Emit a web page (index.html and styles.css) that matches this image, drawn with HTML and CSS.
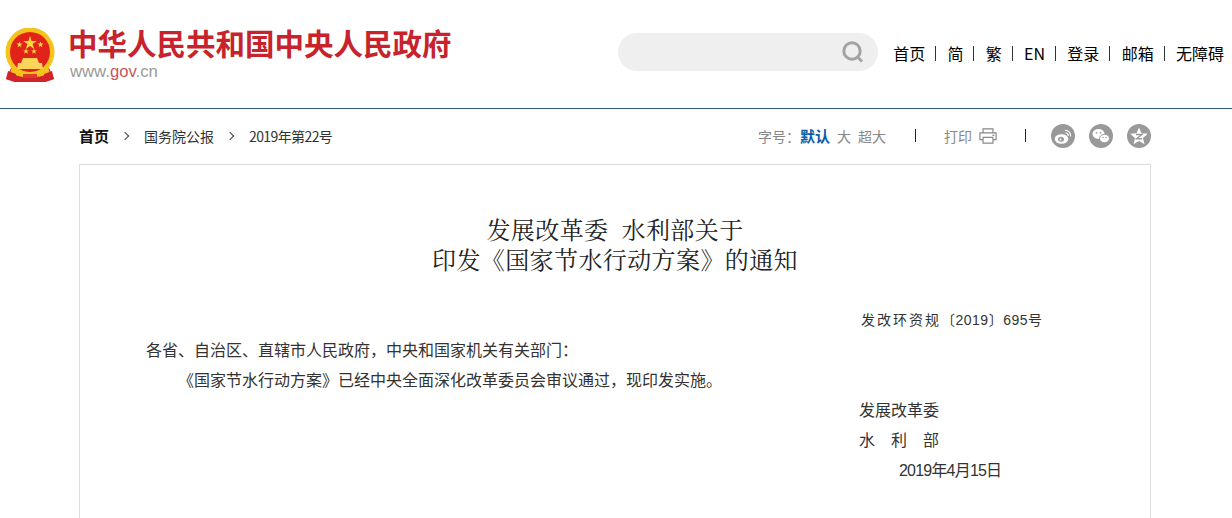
FILE: index.html
```html
<!DOCTYPE html>
<html lang="zh-CN">

<head>
    <meta charset="UTF-8">
    <meta name="viewport" content="width=device-width, initial-scale=1.0">
    <title>发展改革委 水利部关于印发《国家节水行动方案》的通知</title>
    <link rel="stylesheet" href="styles.css">
</head>

<body>
    <header class="header">
        <div class="logo">
            <svg class="emblem" width="50" height="54" viewBox="0 0 50 54">
                <path d="M6 40 L1 51 L10 54 L40 54 L49 51 L44 40 Z" fill="#d2232a" />
                <circle cx="25" cy="24" r="24.500" fill="#f5c31c" />
                <circle cx="25" cy="24" r="20" fill="#e2231a" />
                <polygon points="25,8 26.600,13 31.800,13 27.600,16 29.200,21 25,18 20.800,21 22.400,16 18.200,13 23.400,13" fill="#fbd93a" />
                <polygon points="14.500,13.500 15.300,15.600 17.500,15.600 15.700,17 16.400,19.200 14.500,17.900 12.600,19.200 13.300,17 11.500,15.600 13.700,15.600" fill="#fbd93a" />
                <polygon points="35.500,13.500 36.300,15.600 38.500,15.600 36.700,17 37.400,19.200 35.500,17.900 33.600,19.200 34.300,17 32.500,15.600 34.700,15.600" fill="#fbd93a" />
                <polygon points="21,20.500 21.800,22.500 23.800,22.500 22.200,23.800 22.800,25.800 21,24.600 19.200,25.800 19.800,23.800 18.200,22.500 20.200,22.500" fill="#fbd93a" />
                <polygon points="29,20.500 29.800,22.500 31.800,22.500 30.200,23.800 30.800,25.800 29,24.600 27.200,25.800 27.800,23.800 26.200,22.500 28.200,22.500" fill="#fbd93a" />
                <path d="M18 30 L32 30 L34 35 L37 35 L38 41 L12 41 L13 35 L16 35 Z" fill="#fbd45a" />
                <path d="M7 39 Q25 49 43 39 L45 45 Q25 54 5 45 Z" fill="#f5c31c" />
                <path d="M3 43 L11 46 L10 54 L1 51 Z M47 43 L39 46 L40 54 L49 51 Z" fill="#d2232a" />
                <rect x="18" y="46" width="14" height="4" fill="#e03a2a" />
            </svg>
            <div class="logo-text">
                <div class="logo-name">中华人民共和国中央人民政府</div>
                <div class="logo-url">www.<span class="logo-url-red">gov</span>.cn</div>
            </div>
        </div>
        <div class="header-right">
            <div class="search">
                <svg width="24" height="24" viewBox="0 0 24 24">
                    <circle cx="11" cy="11" r="8.200" fill="none" stroke="#a3a3a3" stroke-width="3" />
                    <line x1="16.500" y1="17" x2="21" y2="21.500" stroke="#a3a3a3" stroke-width="3" />
                </svg>
            </div>
            <nav class="top-nav">
                <a>首页</a><i></i><a>简</a><i></i><a>繁</a><i></i><a>EN</a><i></i><a>登录</a><i></i><a>邮箱</a><i></i><a>无障碍</a>
            </nav>
        </div>
    </header>

    <div class="toolbar">
        <div class="crumbs">
            <a class="crumb-home">首页</a>
            <span class="arrow"></span>
            <a>国务院公报</a>
            <span class="arrow"></span>
            <a class="crumb-issue">2019年第22号</a>
        </div>
        <div class="tools">
            <span class="size-label">字号：</span>
            <a class="size-on">默认</a>
            <a class="size">大</a>
            <a class="size">超大</a>
            <i class="tool-line line-a"></i>
            <span class="print">打印</span>
            <svg class="print-icon" width="18" height="18" viewBox="0 0 20 18">
                <path d="M4.500 5V1h11v4M4.500 13H1V5.500h18V13h-3.500M4.500 10.500h11v6.500h-11z" fill="none" stroke="#888" stroke-width="1.300" />
                <rect x="15" y="7.500" width="2" height="1.500" fill="#888" />
            </svg>
            <i class="tool-line line-b"></i>
            <svg class="share" width="24" height="24" viewBox="0 0 24 24">
                <circle cx="12" cy="12" r="12" fill="#999" />
                <ellipse cx="10.500" cy="15" rx="6.800" ry="4.800" fill="#fff" />
                <ellipse cx="10" cy="15.200" rx="3" ry="2.500" fill="#999" />
                <circle cx="9.500" cy="15.500" r="1" fill="#fff" />
                <path d="M14 6.500a5 5 0 0 1 5.500 6M14.500 9a2.500 2.500 0 0 1 2.700 3" fill="none" stroke="#fff" stroke-width="1.200" />
            </svg>
            <svg class="share" width="24" height="24" viewBox="0 0 24 24">
                <circle cx="12" cy="12" r="12" fill="#999" />
                <ellipse cx="9.500" cy="10" rx="6" ry="5" fill="#fff" />
                <ellipse cx="15.500" cy="14.500" rx="5" ry="4.200" fill="#fff" stroke="#999" stroke-width="1" />
                <circle cx="7.500" cy="8.800" r="0.900" fill="#999" />
                <circle cx="11.500" cy="8.800" r="0.900" fill="#999" />
                <circle cx="14" cy="13.500" r="0.700" fill="#999" />
                <circle cx="17" cy="13.500" r="0.700" fill="#999" />
            </svg>
            <svg class="share" width="24" height="24" viewBox="0 0 24 24">
                <circle cx="12" cy="12" r="12" fill="#999" />
                <polygon points="12,3.500 14.500,9.300 20.800,9.800 16,14 17.500,20.200 12,16.900 6.500,20.200 8,14 3.200,9.800 9.500,9.300" fill="#fff" />
                <path d="M9 10.500h6l-5.500 4.200h5.500" fill="none" stroke="#999" stroke-width="1.400" />
            </svg>
        </div>
    </div>

    <main class="article">
        <h1 class="article-title">发展改革委&nbsp;&nbsp;水利部关于<br>印发《国家节水行动方案》的通知</h1>
        <p class="doc-no"><span class="doc-org">发改环资规</span>〔2019〕695号</p>
        <p class="line">各省、自治区、直辖市人民政府，中央和国家机关有关部门：</p>
        <p class="line indent">《国家节水行动方案》已经中央全面深化改革委员会审议通过，现印发实施。</p>
        <p class="line sign">发展改革委</p>
        <p class="line sign">水&emsp;利&emsp;部</p>
        <p class="line sign date">2019年4月15日</p>
    </main>
</body>

</html>
```

FILE: styles.css
```css
html {
    height: 518px;
    overflow: hidden;
}

body {
    margin: 0;
    background-color: #fff;
    color: #333;
    font-family: "Liberation Sans", "Noto Sans CJK SC", sans-serif;
    font-size: 16px;
}

.header {
    display: flex;
    justify-content: space-between;
    height: 108px;
    border-bottom: 1px solid #2f5a85;
}

.logo {
    display: flex;
    align-items: flex-start;
    padding: 28px 0 0 5px;
}

.emblem {
    flex: none;
}

.logo-text {
    margin-left: 13px;
}

.logo-name {
    margin-top: -1px;
    color: #c8232c;
    font-size: 29.500px;
    font-weight: 700;
    line-height: 36px;
}

.logo-url {
    margin-top: 0;
    padding-left: 2px;
    color: #999;
    font-size: 16.700px;
    line-height: 18px;
}

.logo-url-red {
    color: #c8555c;
}

.header-right {
    display: flex;
    align-items: flex-start;
    padding: 33px 8px 0 0;
}

.search {
    display: flex;
    justify-content: flex-end;
    align-items: center;
    width: 260px;
    height: 38px;
    padding-right: 13px;
    box-sizing: border-box;
    border-radius: 19px;
    background-color: #efefef;
}

.top-nav {
    display: flex;
    align-items: center;
    height: 40px;
    margin-left: 15px;
    color: #000;
    font-family: "Noto Sans CJK SC", sans-serif;
}

.top-nav i {
    display: block;
    width: 1px;
    height: 15px;
    margin: 0 11.300px 0 10px;
    background-color: #333;
}

.toolbar {
    display: flex;
    justify-content: space-between;
    align-items: center;
    height: 55px;
    padding: 0 81px 2px 79px;
    box-sizing: border-box;
    font-family: "Noto Sans CJK SC", sans-serif;
}

.crumbs {
    display: flex;
    align-items: center;
    color: #333;
    font-size: 14px;
}

.crumb-home {
    color: #111;
    font-size: 15px;
    font-weight: 700;
}

.crumb-issue {
    letter-spacing: -0.600px;
}

.arrow {
    width: 6px;
    height: 6px;
    margin: 0 16px 0 13px;
    box-sizing: border-box;
    border-top: 1px solid #444;
    border-right: 1px solid #444;
    transform: rotate(45deg);
}

.tools {
    display: flex;
    align-items: center;
    color: #888;
    font-size: 14px;
}

.size-on {
    color: #0b5ea8;
    font-size: 15px;
    font-weight: 700;
}

.size {
    margin-left: 7px;
}

.tool-line {
    display: block;
    width: 1px;
    height: 13px;
    background-color: #222;
}

.line-a {
    margin: 0 28px 0 29px;
}

.line-b {
    margin: 0 25px 0 28px;
}

.print-icon {
    margin-left: 7px;
}

.share {
    margin-right: 14px;
}

.share:last-child {
    margin-right: 0;
}

.article {
    height: 400px;
    margin: 0 81px 0 79px;
    padding: 0 66px;
    border: 1px solid #ddd;
    border-bottom: none;
}

.article-title {
    margin: 49px 0 0;
    color: #222;
    font-family: "Noto Serif CJK SC", "Liberation Serif", "Noto Sans CJK SC", serif;
    font-size: 24px;
    font-weight: 400;
    letter-spacing: 0.400px;
    line-height: 30px;
    text-align: center;
}

.doc-no {
    margin: 31px 0 1px;
    padding-left: 715px;
    font-size: 14px;
    letter-spacing: 0.500px;
    line-height: 30px;
    white-space: nowrap;
}

.doc-org {
    letter-spacing: 2px;
}

.line {
    margin: 0;
    line-height: 30px;
    white-space: nowrap;
}

.indent {
    text-indent: 32px;
}

.sign {
    padding-left: 713px;
}

.date {
    padding-left: 753px;
    letter-spacing: -0.800px;
}
```
